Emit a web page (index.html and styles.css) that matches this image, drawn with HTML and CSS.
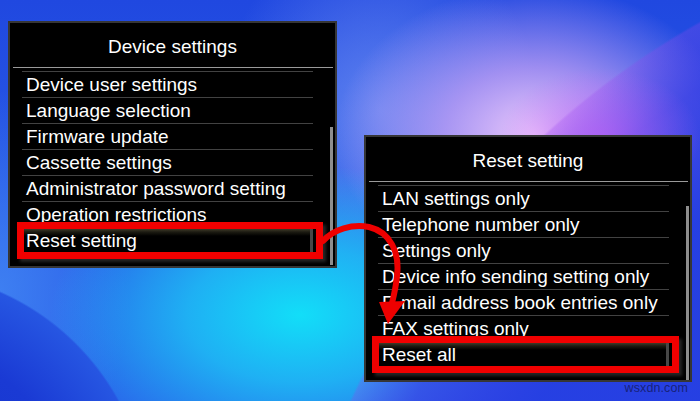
FILE: index.html
```html
<!DOCTYPE html>
<html lang="en">
<head>
<meta charset="utf-8">
<title>Device settings – Reset setting</title>
<link rel="stylesheet" href="styles.css">
</head>
<body>
<div class="desk">
  <section class="panel panel-device">
    <header class="panel-title">Device settings</header>
    <div class="panel-rule"></div>
    <div class="panel-body">
      <ul class="menu">
        <li class="menu-item">Device user settings</li>
        <li class="menu-item">Language selection</li>
        <li class="menu-item">Firmware update</li>
        <li class="menu-item">Cassette settings</li>
        <li class="menu-item">Administrator password setting</li>
        <li class="menu-item">Operation restrictions</li>
        <li class="menu-item is-selected">Reset setting</li>
      </ul>
      <div class="scroll scroll-device"><div class="scroll-thumb"></div></div>
    </div>
  </section>

  <section class="panel panel-reset">
    <header class="panel-title">Reset setting</header>
    <div class="panel-rule"></div>
    <div class="panel-body">
      <ul class="menu">
        <li class="menu-item">LAN settings only</li>
        <li class="menu-item">Telephone number only</li>
        <li class="menu-item">Settings only</li>
        <li class="menu-item">Device info sending setting only</li>
        <li class="menu-item">E-mail address book entries only</li>
        <li class="menu-item">FAX settings only</li>
        <li class="menu-item is-selected">Reset all</li>
      </ul>
      <div class="scroll scroll-reset"><div class="scroll-thumb"></div></div>
    </div>
  </section>

  <div class="callout callout-device"></div>
  <div class="callout callout-reset"></div>

  <svg class="arrow" viewBox="0 0 700 401" width="700" height="401" aria-hidden="true">
    <path d="M323 241 C334 229 352 224 369 227 C390 232 400 252 397 276 C396 287 394 295 392 303" fill="none" stroke="#ee0000" stroke-width="6" stroke-linecap="round"/>
    <polygon points="379,302 405,301 388,324" fill="#ee0000"/>
  </svg>

  <div class="watermark">wsxdn.com</div>
</div>
</body>
</html>
```

FILE: styles.css
```css
html, body {
  margin: 0;
  padding: 0;
}

body {
  width: 700px;
  height: 401px;
  overflow: hidden;
  font-family: "Liberation Sans", Arial, sans-serif;
}

.desk {
  position: relative;
  width: 700px;
  height: 401px;
  overflow: hidden;
  background:
    radial-gradient(ellipse 100px 70px at 600px 138px, rgba(192, 96, 246, 0.7), rgba(170, 90, 240, 0) 100%),
    radial-gradient(circle 836px at 1109px 750px, rgba(38, 62, 226, 0.95) 80%, rgba(60, 60, 228, 0.7) 93%, rgba(140, 72, 236, 0.3) 99.7%, rgba(140, 72, 236, 0) 100%),
    radial-gradient(circle 250px at -100px 520px, #1432cc 0%, #1a3ad4 70%, #2656e2 99.2%, rgba(38, 86, 226, 0) 100%),
    radial-gradient(ellipse 200px 150px at 535px 135px, rgba(244, 206, 252, 0.97), rgba(205, 165, 246, 0.72) 45%, rgba(160, 130, 240, 0) 100%),
    radial-gradient(ellipse 250px 150px at 300px 315px, #12def8, rgba(28, 196, 246, 0.8) 45%, rgba(40, 150, 240, 0) 100%),
    radial-gradient(ellipse 160px 180px at 380px 110px, rgba(120, 150, 245, 0.7), rgba(100, 130, 240, 0) 100%),
    radial-gradient(ellipse 130px 200px at 0px 290px, rgba(70, 140, 245, 0.7), rgba(70, 140, 245, 0) 100%),
    linear-gradient(180deg, #2048e0 0%, #2a5ee8 60%, #2a62ea 100%);
}

/* ---------- Panels (windows on the desktop) ---------- */

.panel {
  position: absolute;
  box-sizing: border-box;
  width: 329px;
  height: 247px;
  background: #000;
  border: 2px solid #363636;
  display: flex;
  flex-direction: column;
  color: #fff;
}

.panel-device {
  left: 8px;
  top: 21px;
}

.panel-reset {
  left: 364px;
  top: 135px;
  width: 328px;
}

.panel-title {
  box-sizing: border-box;
  height: 44px;
  padding-top: 11px;
  line-height: 25px;
  font-size: 19px;
  text-align: center;
  white-space: nowrap;
}

.panel-rule {
  height: 1px;
  margin: 0 2px 0 3px;
  background: #9a9a9a;
}

.panel-body {
  flex: 1;
  display: flex;
  padding-top: 3px;
}

.menu {
  list-style: none;
  margin: 0 0 0 12px;
  padding: 0;
  width: 291px;
}

.menu-item {
  height: 25px;
  border-top: 1px solid #424242;
  padding-left: 4px;
  line-height: 25px;
  font-size: 19px;
  white-space: nowrap;
}

.menu-item.is-selected {
  background: linear-gradient(180deg, #4a4630 0px, #1c1b12 4px, #000 8px);
  box-shadow: inset -3px 0 0 #474747;
}

.scroll {
  margin-left: auto;
  width: 3px;
  display: flex;
  flex-direction: column;
}

.scroll-device {
  margin-right: 2px;
}

.scroll-reset {
  margin-right: 1px;
}

.scroll-thumb {
  flex: 1;
  background: #8e8e8e;
}

.scroll-device .scroll-thumb {
  margin: 56px 0 1px;
}

.scroll-reset .scroll-thumb {
  margin: 21px 0 0;
}

/* ---------- Red call-outs over the screenshots ---------- */

.callout {
  position: absolute;
  box-sizing: border-box;
  height: 37px;
  border: 7px solid #f00000;
  box-shadow: 3px 3px 3px rgba(45, 45, 45, 0.85);
}

.callout-device {
  left: 17px;
  top: 222px;
  width: 306px;
}

.callout-reset {
  left: 372px;
  top: 336px;
  width: 307px;
}

.arrow {
  position: absolute;
  left: 0;
  top: 0;
  pointer-events: none;
}

.watermark {
  position: absolute;
  right: 12px;
  bottom: 6px;
  font-size: 12.5px;
  color: #17227a;
  letter-spacing: 0.1px;
}
```
